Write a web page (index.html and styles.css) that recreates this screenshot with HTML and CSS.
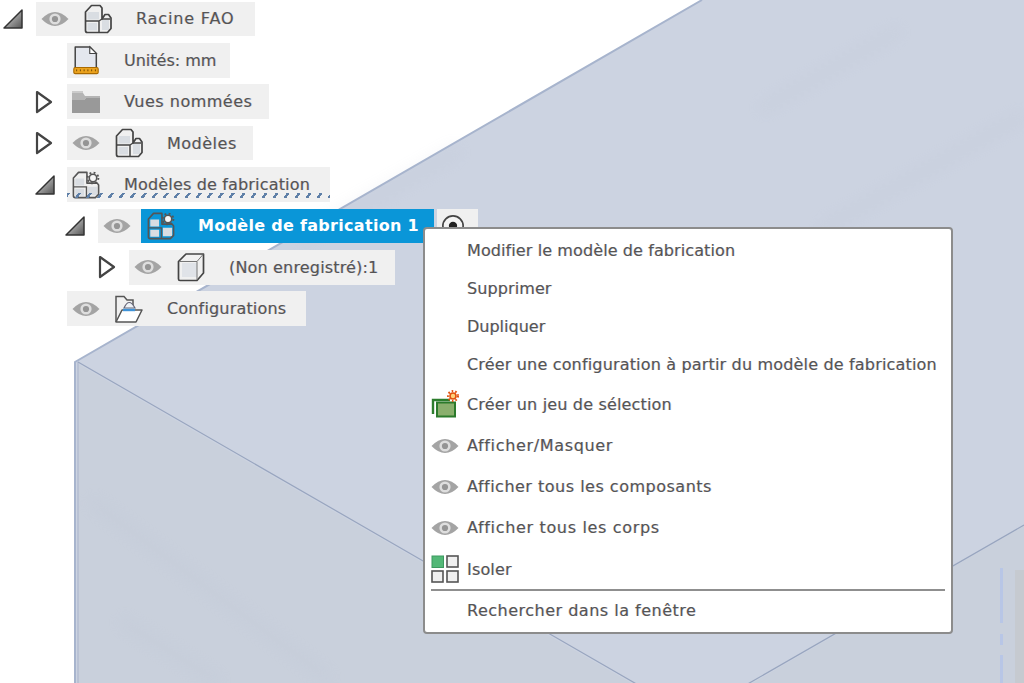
FILE: index.html
```html
<!DOCTYPE html>
<html lang="fr">
<head>
<meta charset="utf-8">
<title>Racine FAO</title>
<link rel="stylesheet" href="styles.css">
</head>
<body>
<svg class="defs" width="0" height="0" aria-hidden="true">
  <defs>
    <linearGradient id="tri" x1="0" y1="0" x2="1" y2="1"><stop offset="0" stop-color="#e6e6e6"/><stop offset="1" stop-color="#555"/></linearGradient>
    <symbol id="open" viewBox="0 0 20 20"><path d="M1 19 L19 1 V19 Z" fill="url(#tri)" stroke="#333" stroke-width="1.500" stroke-linejoin="round"/></symbol>
    <symbol id="closed" viewBox="0 0 18 24"><path d="M2 2 L16 12 L2 22 Z" fill="#fff" stroke="#444" stroke-width="2.200" stroke-linejoin="round"/></symbol>
    <symbol id="eye" viewBox="0 0 28 18"><path d="M0.5 9 Q14 -5 27.5 9 Q14 23 0.5 9 Z" fill="#a4a4a4"/><circle cx="14" cy="9" r="5.600" fill="#dedede"/><circle cx="14" cy="9" r="3.100" fill="#959595"/></symbol>
    <symbol id="part" viewBox="0 0 28 30">
      <path d="M3.500 8H15V15.500H3.500ZM3.500 19H13V26.500H3.500ZM18 16H25V26H18Z" fill="#d9dde2"/>
      <path d="M1.500 26.500V8L7.500 1.500H16L18 4V15L21 10.500H24.500L27 14V24.500L23.500 28.500H3.500Q1.500 28.500 1.500 26.500Z" fill="none" stroke="#444" stroke-width="1.700" stroke-linejoin="round"/>
      <path d="M1.500 17H15M15 17V28.500M18 15L15 17M18 15H26" fill="none" stroke="#444" stroke-width="1.500"/>
    </symbol>
    <symbol id="mfg" viewBox="0 0 30 30">
      <path d="M3.500 8H13V15.500H3.500ZM3.500 19H13V26.500H3.500ZM17 17H27V26H17Z" fill="#d9dde2"/>
      <path d="M1.500 26.500V7.500L7 1.500H16V13H27L28.500 15V25L25 28.500H3.500Q1.500 28.500 1.500 26.500Z" fill="none" stroke="#555" stroke-width="1.700" stroke-linejoin="round"/>
      <path d="M1.500 17H15.500V28.500" fill="none" stroke="#555" stroke-width="1.500"/>
      <circle cx="22.500" cy="7.500" r="4" fill="#f7f7f7" stroke="#555" stroke-width="1.700"/>
      <circle cx="22.500" cy="7.500" r="5.800" fill="none" stroke="#555" stroke-width="2" stroke-dasharray="2 2.550"/>
    </symbol>
    <symbol id="units" viewBox="0 0 28 32">
      <path d="M2.500 25V2H18L25 9V25Z" fill="#e4e7ee" stroke="#444" stroke-width="1.600" stroke-linejoin="round"/>
      <path d="M18 2V9H25Z" fill="#fff" stroke="#444" stroke-width="1.200"/>
      <rect x="1" y="24" width="26" height="6.500" rx="1.500" fill="#eba21d" stroke="#a96a00" stroke-width="1.200"/>
      <path d="M4 26V28M8 26V28M12 26V28M16 26V28M20 26V28M24 26V28" stroke="#6e4700" stroke-width="1"/>
    </symbol>
    <symbol id="folder" viewBox="0 0 28 24"><path d="M0 3H11L13 6H28V8H14L12 10H0Z" fill="#b4b4b4"/><path d="M0 10H12L14 8H28V23H0Z" fill="#999"/><path d="M0 1H11V3H0Z" fill="#cbcbcb"/></symbol>
    <symbol id="cube" viewBox="0 0 28 30"><path d="M5 11H20V25H5Z" fill="#e0e3e8"/><path d="M1.500 9.500L9 2H26.500V21L20 28.500H3Q1.500 28.500 1.500 27Z" fill="none" stroke="#444" stroke-width="1.700" stroke-linejoin="round"/><path d="M2 9.500H20V28M20 9.500L26 2.500" fill="none" stroke="#777" stroke-width="1"/></symbol>
    <symbol id="config" viewBox="0 0 28 28">
      <path d="M1 27V1.500H9L12 5H18V11" fill="none" stroke="#555" stroke-width="1.500"/>
      <path d="M9 13Q14 2 20 13Z" fill="#eef2f7" stroke="#667" stroke-width="1.200"/>
      <path d="M1 27L7 15H27L21 27Z" fill="#fff" stroke="#555" stroke-width="1.500" stroke-linejoin="round"/>
      <path d="M8 15H20" stroke="#3f93d8" stroke-width="2.400"/>
    </symbol>
    <symbol id="target" viewBox="0 0 26 26"><circle cx="13" cy="13" r="11" fill="#f4f4f4" stroke="#444" stroke-width="1.800"/><circle cx="13" cy="13" r="4.500" fill="#222"/></symbol>
    <symbol id="selset" viewBox="0 0 28 28">
      <path d="M2 24V10H19" fill="none" stroke="#2d7d2d" stroke-width="2.400"/>
      <rect x="6" y="12.500" width="18" height="14" fill="#8aaf6d" stroke="#2b7a2b" stroke-width="2"/>
      <circle cx="22" cy="6" r="3" fill="#ffd27a" stroke="#e2500c" stroke-width="1.600"/>
      <circle cx="22" cy="6" r="5" fill="none" stroke="#e2500c" stroke-width="2" stroke-dasharray="1.600 2"/>
    </symbol>
    <symbol id="isolate" viewBox="0 0 28 28">
      <rect x="1" y="1" width="11.500" height="11.500" fill="#53b877" stroke="#3d9960" stroke-width="1"/>
      <rect x="16" y="1" width="11" height="11" fill="#f0f0f0" stroke="#555" stroke-width="1.600"/>
      <rect x="1" y="16" width="11" height="11" fill="#f0f0f0" stroke="#555" stroke-width="1.600"/>
      <rect x="16" y="16" width="11" height="11" fill="#f0f0f0" stroke="#555" stroke-width="1.600"/>
    </symbol>
  </defs>
</svg>

<svg class="scene" viewBox="0 0 1024 683" aria-hidden="true">
  <defs><filter id="soft"><feGaussianBlur stdDeviation="8"/></filter></defs>
  <path d="M75 362L702 0H1024V683H75Z" fill="#ccd3e1"/>
  <path d="M78 364L692 718L1024 526V683H78Z" fill="#c9d0dc"/>
  <g filter="url(#soft)" fill="none" stroke="#bcc3d0" stroke-width="9" opacity=".28">
    <path d="M820 230L1024 115"/>
    <path d="M760 110L900 30"/>
    <path d="M90 500L330 680"/>
    <path d="M120 620L220 683"/>
    <path d="M300 240L460 150"/>
  </g>
  <rect x="1015" y="570" width="9" height="113" fill="#c6cad0"/>
  <path d="M1001.500 568V623M1001.500 634V645M1001.500 655V683" stroke="#b8c6e6" stroke-width="3"/>
  <path d="M75 683V362L702 0" fill="none" stroke="#a7b4cd" stroke-width="2"/>
  <path d="M78 362V683" stroke="#b3bdd1" stroke-width="1.500" fill="none"/>
  <path d="M78 362L692 716L1024 525" fill="none" stroke="#98a5bf" stroke-width="1.200"/>
</svg>

<ul class="tree">
  <li class="row">
    <svg class="arrow open"><use href="#open"/></svg>
    <div class="chip wide">
      <svg class="eye"><use href="#eye"/></svg>
      <svg class="node after-eye"><use href="#part"/></svg>
      <span class="label sp4">Racine FAO</span>
    </div>
  </li>
  <li class="row lvl1">
    <div class="chip tight">
      <svg class="node"><use href="#units"/></svg>
      <span class="label">Unités: mm</span>
    </div>
  </li>
  <li class="row lvl0b">
    <svg class="arrow closed"><use href="#closed"/></svg>
    <div class="chip mid">
      <svg class="folder"><use href="#folder"/></svg>
      <span class="label sp2">Vues nommées</span>
    </div>
  </li>
  <li class="row lvl0b">
    <svg class="arrow closed"><use href="#closed"/></svg>
    <div class="chip mid">
      <svg class="eye"><use href="#eye"/></svg>
      <svg class="node after-eye"><use href="#part"/></svg>
      <span class="label sp2">Modèles</span>
    </div>
  </li>
  <li class="row lvl0b">
    <svg class="arrow open"><use href="#open"/></svg>
    <div class="chip wavy">
      <svg class="node"><use href="#mfg"/></svg>
      <span class="label sp1">Modèles de fabrication</span>
    </div>
  </li>
  <li class="row lvl1b">
    <svg class="arrow open"><use href="#open"/></svg>
    <div class="chip c6">
      <svg class="eye"><use href="#eye"/></svg>
    </div>
    <div class="chip selected">
      <svg class="node"><use href="#mfg"/></svg>
      <span class="label">Modèle de fabrication 1</span>
    </div>
    <div class="chip c6b">
      <svg class="target"><use href="#target"/></svg>
    </div>
  </li>
  <li class="row lvl2">
    <svg class="arrow closed"><use href="#closed"/></svg>
    <div class="chip mid">
      <svg class="eye"><use href="#eye"/></svg>
      <svg class="node after-eye"><use href="#cube"/></svg>
      <span class="label sp1">(Non enregistré):1</span>
    </div>
  </li>
  <li class="row lvl1">
    <div class="chip">
      <svg class="eye"><use href="#eye"/></svg>
      <svg class="node after-eye"><use href="#config"/></svg>
      <span class="label sp1">Configurations</span>
    </div>
  </li>
</ul>

<div class="menu">
  <div class="item plain"><span class="sp0">Modifier le modèle de fabrication</span></div>
  <div class="item plain"><span class="sp0">Supprimer</span></div>
  <div class="item plain"><span>Dupliquer</span></div>
  <div class="item plain"><span class="sp1">Créer une configuration à partir du modèle de fabrication</span></div>
  <div class="item"><svg class="micon"><use href="#selset"/></svg><span class="sp1">Créer un jeu de sélection</span></div>
  <div class="item"><svg class="micon eye-m"><use href="#eye"/></svg><span class="sp3">Afficher/Masquer</span></div>
  <div class="item"><svg class="micon eye-m"><use href="#eye"/></svg><span class="sp2">Afficher tous les composants</span></div>
  <div class="item"><svg class="micon eye-m"><use href="#eye"/></svg><span class="sp3">Afficher tous les corps</span></div>
  <div class="item"><svg class="micon"><use href="#isolate"/></svg><span class="sp1">Isoler</span></div>
  <div class="sep"></div>
  <div class="item plain last"><span class="sp2">Rechercher dans la fenêtre</span></div>
</div>
</body>
</html>
```

FILE: styles.css
```css
* { box-sizing: border-box; }

html, body {
  margin: 0;
  width: 1024px;
  height: 683px;
  overflow: hidden;
  background: #fff;
}

body {
  position: relative;
  font-family: "DejaVu Sans", sans-serif;
  font-size: 16px;
  color: #555;
  text-shadow: .6px 0 rgba(80, 110, 190, .3), -.6px 0 rgba(200, 140, 70, .25);
}

.sp0 { letter-spacing: .1px; }
.sp1 { letter-spacing: .17px; }
.sp2 { letter-spacing: .5px; }
.sp3 { letter-spacing: .66px; }
.sp4 { letter-spacing: .85px; }

.defs { position: absolute; }

.scene {
  position: absolute;
  left: 0;
  top: 0;
  width: 1024px;
  height: 683px;
}

.tree {
  position: relative;
  list-style: none;
  margin: 0;
  padding: 1.7px 0 0 3px;
  display: flex;
  flex-direction: column;
  gap: 6.9px;
}

.row {
  display: flex;
  align-items: center;
  height: 34.5px;
}

.lvl1 { padding-left: 64px; }
.lvl0b { padding-left: 32px; }
.lvl1b { padding-left: 62px; }
.lvl2 { padding-left: 95px; }

.arrow { flex: none; }
.arrow.open { width: 20px; height: 20px; margin-right: 13px; }
.arrow.closed { width: 18px; height: 24px; margin-right: 17px; }
.lvl2 .arrow.closed { margin-right: 13px; }
.lvl0b .arrow.closed { margin-right: 14px; }
.lvl0b .arrow.open { margin-right: 12px; }

.chip {
  position: relative;
  display: flex;
  align-items: center;
  height: 100%;
  padding: 0 20px 0 5px;
  background: #f0f0f0;
}

.chip.tight { padding-right: 14px; }
.chip.mid { padding-right: 16.5px; }
.chip.wide { padding-right: 21px; }

.eye { width: 28px; height: 18px; flex: none; }
.node { width: 28px; height: 30px; flex: none; }
.after-eye { margin-left: 15px; }
.folder { width: 28px; height: 24px; flex: none; }
.target { width: 24px; height: 24px; }

.label {
  margin-left: 24px;
  white-space: nowrap;
}

.wavy::after {
  content: "";
  position: absolute;
  left: 0;
  right: 0;
  bottom: 4px;
  height: 5px;
  background: repeating-linear-gradient(125deg, #5f80a8 0 2.5px, transparent 2.5px 9px);
}

.c6 { padding-right: 10px; }
.c6b { width: 41px; margin-left: 3px; padding: 0 0 0 4px; }

.selected {
  background: #0a96d8;
  color: #fff;
  width: 293px;
  padding-left: 6px;
  text-shadow: none;
}

.selected .label {
  margin-left: 23px;
  font-weight: 700;
  letter-spacing: .3px;
}

.menu {
  position: absolute;
  left: 423px;
  top: 227px;
  width: 530px;
  height: 407px;
  padding: 2px 6px 0;
  background: #fff;
  border: 2px solid #8c8c8c;
  border-radius: 4px;
}

.item {
  display: flex;
  align-items: center;
  height: 41.2px;
  white-space: nowrap;
}

.item.plain { height: 38.2px; padding-left: 36px; }
.item.last { height: 40px; }

.micon { width: 28px; height: 28px; margin-right: 8px; flex: none; }
.micon.eye-m { height: 18px; }

.sep {
  height: 2px;
  margin-top: -1px;
  background: #8f8f8f;
}
```
